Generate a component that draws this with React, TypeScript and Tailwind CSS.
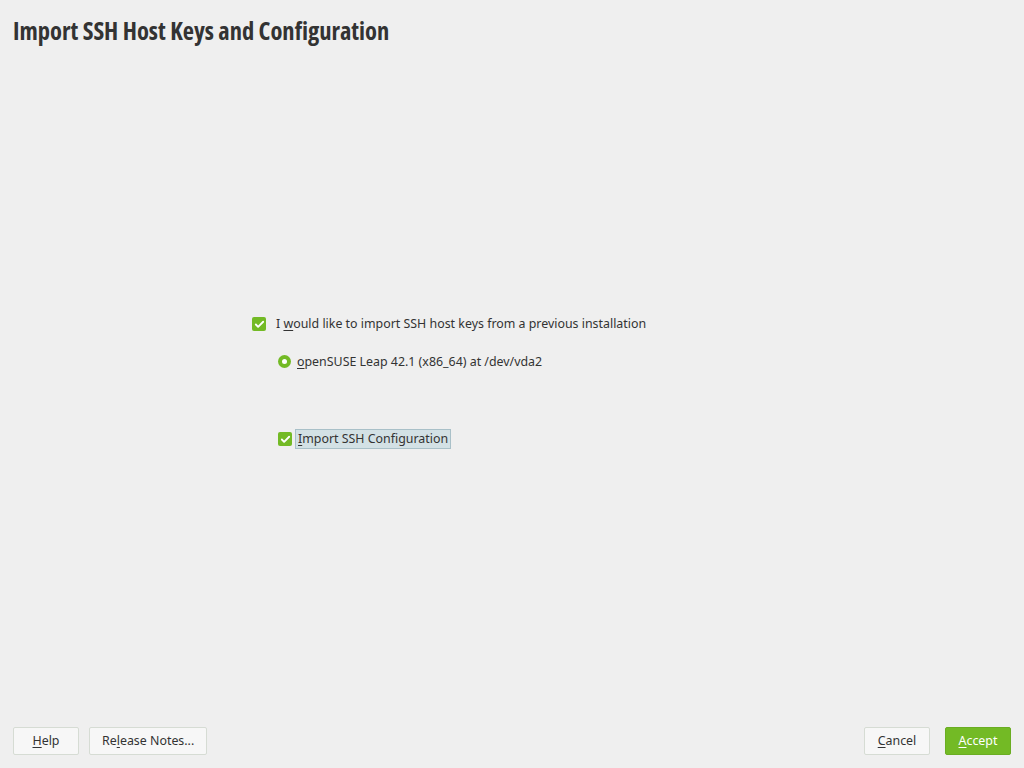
import { Check } from "lucide-react";

function CheckBox() {
  return (
    <span className="flex h-[14px] w-[14px] items-center justify-center rounded-[2px] bg-[#73ba25]">
      <Check className="h-[11px] w-[11px] text-white" strokeWidth={4} />
    </span>
  );
}

function Btn({ label, u, rest, primary }: { label?: string; u: string; rest: string; primary?: boolean }) {
  return (
    <button
      type="button"
      className={
        primary
          ? "h-[28px] min-w-[66px] rounded-[2px] border border-[#6aad22] bg-[#73ba25] px-3 text-[12.4px] text-white"
          : "h-[28px] min-w-[66px] rounded-[2px] border border-[#d6dcd4] bg-[#f7f7f7] px-3 text-[12.4px] text-[#333]"
      }
    >
      {label}
      <span className="underline underline-offset-2">{u}</span>
      {rest}
    </button>
  );
}

export default function App() {
  return (
    <div
      className="flex h-[768px] w-[1024px] flex-col bg-[#efefef] text-[#333]"
      style={{ fontFamily: "'Noto Sans', 'Open Sans', sans-serif" }}
    >
      <h1
        className="px-[13px] pt-[16px] text-[24.5px] font-bold leading-[30px] text-[#333] font-stretch-condensed"
        style={{ fontFamily: "'Open Sans', sans-serif" }}
      >
        Import SSH Host Keys and Configuration
      </h1>
      <main className="flex flex-1 flex-col justify-center pb-[9px] pl-[252px]">
        <div className="flex flex-col">
          <label className="flex items-center gap-[10px] text-[12.4px]">
            <CheckBox />
            <span>
              I <span className="underline underline-offset-2">w</span>ould like to import SSH host keys from a previous installation
            </span>
          </label>
          <label className="mt-[19px] flex items-center gap-[6px] pl-[26px] text-[12.4px]">
            <span className="flex h-[13px] w-[13px] items-center justify-center rounded-full bg-[#73ba25]">
              <span className="h-[5px] w-[5px] rounded-full bg-white" />
            </span>
            <span>
              <span className="underline underline-offset-2">o</span>penSUSE Leap 42.1 (x86_64) at /dev/vda2
            </span>
          </label>
          <label className="mt-[58px] flex items-center gap-[3px] pl-[26px] text-[12.4px]">
            <CheckBox />
            <span className="border border-[#a9c0c8] bg-[#d3e1e5] px-[2px] leading-[18px]">
              <span className="underline underline-offset-2">I</span>mport SSH Configuration
            </span>
          </label>
        </div>
      </main>
      <footer className="flex items-center justify-between px-[13px] pb-[13px]">
        <div className="flex gap-[10px]">
          <Btn u="H" rest="elp" />
          <Btn label="Re" u="l" rest="ease Notes..." />
        </div>
        <div className="flex gap-[15px]">
          <Btn u="C" rest="ancel" />
          <Btn u="A" rest="ccept" primary />
        </div>
      </footer>
    </div>
  );
}
